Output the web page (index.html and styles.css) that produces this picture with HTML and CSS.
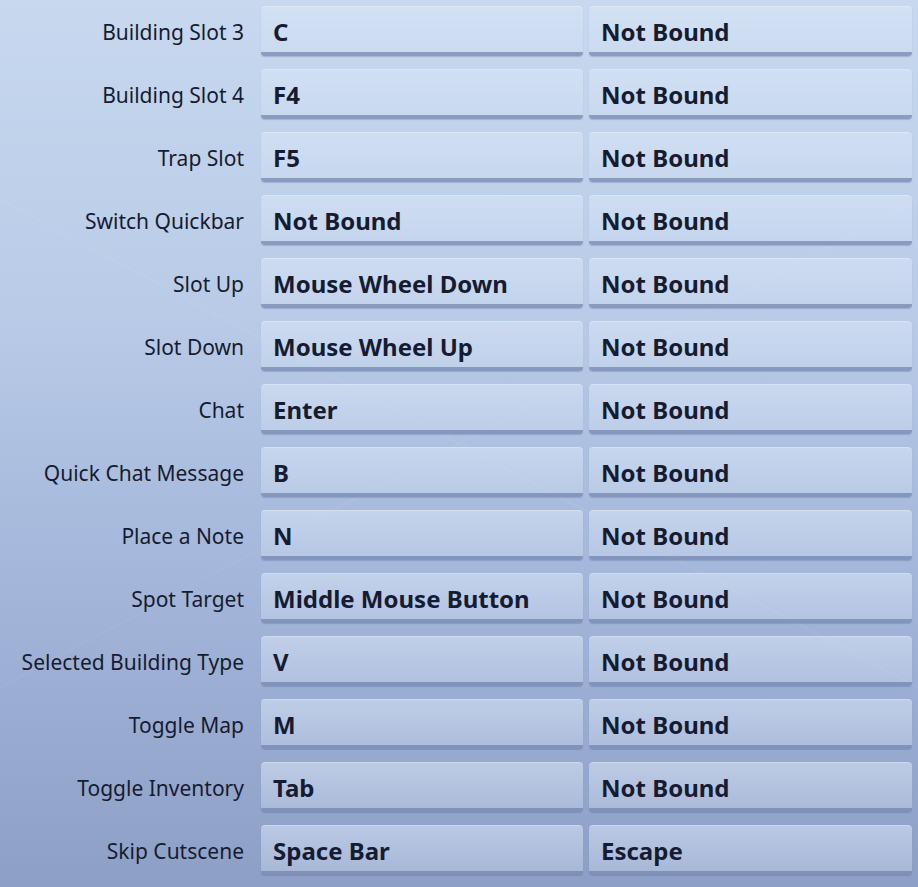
FILE: index.html
```html
<!DOCTYPE html>
<html>
<head>
<meta charset="utf-8">
<link rel="stylesheet" href="styles.css">
</head>
<body>
<div class="list">
  <div class="row"><div class="label">Building Slot 3</div><div class="key">C</div><div class="key">Not Bound</div></div>
  <div class="row"><div class="label">Building Slot 4</div><div class="key">F4</div><div class="key">Not Bound</div></div>
  <div class="row"><div class="label">Trap Slot</div><div class="key">F5</div><div class="key">Not Bound</div></div>
  <div class="row"><div class="label">Switch Quickbar</div><div class="key">Not Bound</div><div class="key">Not Bound</div></div>
  <div class="row"><div class="label">Slot Up</div><div class="key">Mouse Wheel Down</div><div class="key">Not Bound</div></div>
  <div class="row"><div class="label">Slot Down</div><div class="key">Mouse Wheel Up</div><div class="key">Not Bound</div></div>
  <div class="row"><div class="label">Chat</div><div class="key">Enter</div><div class="key">Not Bound</div></div>
  <div class="row"><div class="label">Quick Chat Message</div><div class="key">B</div><div class="key">Not Bound</div></div>
  <div class="row"><div class="label">Place a Note</div><div class="key">N</div><div class="key">Not Bound</div></div>
  <div class="row"><div class="label">Spot Target</div><div class="key">Middle Mouse Button</div><div class="key">Not Bound</div></div>
  <div class="row"><div class="label">Selected Building Type</div><div class="key">V</div><div class="key">Not Bound</div></div>
  <div class="row"><div class="label">Toggle Map</div><div class="key">M</div><div class="key">Not Bound</div></div>
  <div class="row"><div class="label">Toggle Inventory</div><div class="key">Tab</div><div class="key">Not Bound</div></div>
  <div class="row"><div class="label">Skip Cutscene</div><div class="key">Space Bar</div><div class="key">Escape</div></div>
</div>
</body>
</html>
```
FILE: styles.css
```css
html, body {
  margin: 0;
  padding: 0;
}
body {
  width: 918px;
  height: 887px;
  overflow: hidden;
  font-family: "Noto Sans", "Open Sans", sans-serif;
  color: #151c30;
  background:
    linear-gradient(28deg, transparent 49.85%, rgba(255,255,255,0.05) 50%, transparent 50.15%),
    linear-gradient(152deg, transparent 49.85%, rgba(255,255,255,0.04) 50%, transparent 50.15%),
    linear-gradient(180deg, #c7d8ef 0%, #b9cbe7 35%, #a4b6da 65%, #8e9fc6 100%);
}
.list {
  display: flex;
  flex-direction: column;
  gap: 13px;
  padding-top: 6px;
}
.row {
  display: grid;
  grid-template-columns: 255px 322px 323px;
  column-gap: 6px;
  height: 50px;
}
.label {
  display: flex;
  align-items: center;
  justify-content: flex-end;
  padding-right: 11px;
  font-size: 21px;
  padding-top: 1px;
  white-space: nowrap;
}
.key {
  box-sizing: border-box;
  display: flex;
  align-items: center;
  padding: 5px 0 0 12px;
  border-radius: 4px;
  font-weight: 700;
  font-size: 24px;
  white-space: nowrap;
  background: linear-gradient(180deg, rgba(220,232,248,0.55) 0%, rgba(215,228,247,0.35) 100%);
  border-bottom: 4px solid rgba(80, 100, 150, 0.55);
  box-shadow: 0 1px 1px rgba(60, 80, 130, 0.25), inset 0 1px 0 rgba(255,255,255,0.25);
}
```
